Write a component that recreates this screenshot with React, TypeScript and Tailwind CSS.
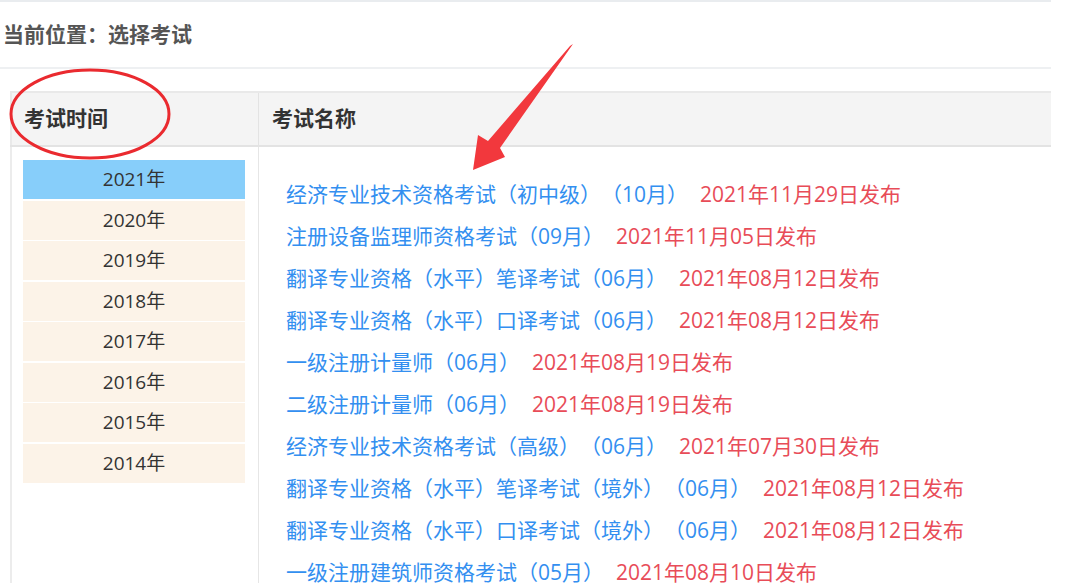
const years = ["2021年", "2020年", "2019年", "2018年", "2017年", "2016年", "2015年", "2014年"];

const exams = [
  { name: "经济专业技术资格考试（初中级）（10月）", date: "2021年11月29日发布" },
  { name: "注册设备监理师资格考试（09月）", date: "2021年11月05日发布" },
  { name: "翻译专业资格（水平）笔译考试（06月）", date: "2021年08月12日发布" },
  { name: "翻译专业资格（水平）口译考试（06月）", date: "2021年08月12日发布" },
  { name: "一级注册计量师（06月）", date: "2021年08月19日发布" },
  { name: "二级注册计量师（06月）", date: "2021年08月19日发布" },
  { name: "经济专业技术资格考试（高级）（06月）", date: "2021年07月30日发布" },
  { name: "翻译专业资格（水平）笔译考试（境外）（06月）", date: "2021年08月12日发布" },
  { name: "翻译专业资格（水平）口译考试（境外）（06月）", date: "2021年08月12日发布" },
  { name: "一级注册建筑师资格考试（05月）", date: "2021年08月10日发布" },
];

export default function App() {
  return (
    <div className="relative w-[1071px] h-[583px] overflow-hidden bg-white font-['Open_Sans','Noto_Sans_CJK_SC',sans-serif] [text-spacing-trim:space-all]">
      <div className="w-[1051px]">
        <div className="h-[2px] bg-[#e9ecef]" />

        {/* breadcrumb */}
        <div className="h-[65px] flex items-center pl-[3px] text-[21px] font-bold text-[#555]">
          当前位置：选择考试
        </div>
        <div className="h-[2px] bg-[#eef0f2]" />

        {/* table */}
        <div className="pt-[22px] pl-[10px]">
          <div className="flex h-[56px] bg-[#f4f4f4] border-t-2 border-b-2 border-t-[#e9e9e9] border-b-[#e3e3e3]">
            <div className="w-[249px] shrink-0 border-l-2 border-r border-l-[#e9e9e9] border-r-[#e3e3e3] flex items-center pl-[12px] text-[21px] font-bold text-[#333]">
              考试时间
            </div>
            <div className="flex-1 flex items-center pl-[13px] text-[21px] font-bold text-[#333]">
              考试名称
            </div>
          </div>

          <div className="flex h-[500px]">
            <div className="w-[249px] shrink-0 border-l-2 border-r border-l-[#ececec] border-r-[#e6e6e6] pl-[11px] pr-[13px] pt-[13px]">
              <div className="flex flex-col gap-[1.5px]">
                {years.map((y, i) => (
                  <div
                    key={y}
                    className={
                      "h-[39px] flex items-center justify-center text-[19px] text-[#333] " +
                      (i === 0 ? "bg-[#87cefa]" : "bg-[#fcf3e8]")
                    }
                  >
                    {y}
                  </div>
                ))}
              </div>
            </div>

            <div className="flex-1 pl-[27px] pt-[27px]">
              {exams.map((e, i) => (
                <div key={i} className="h-[42px] flex items-center whitespace-nowrap">
                  <span className="text-[21px] text-[#338ff0]">{e.name}</span>
                  <span className="ml-[12px] text-[21px] text-[#e84c58]">{e.date}</span>
                </div>
              ))}
            </div>
          </div>
        </div>
      </div>

      {/* annotations */}
      <svg className="absolute left-0 top-0 pointer-events-none" width="1071" height="583">
        <ellipse cx="90" cy="114" rx="79" ry="44" fill="none" stroke="#ea2a2f" strokeWidth="3" />
        <polygon
          points="573,44 500,148 505,157 473,170 478,135 488,141 570,46"
          fill="#f2383d"
        />
      </svg>
    </div>
  );
}
